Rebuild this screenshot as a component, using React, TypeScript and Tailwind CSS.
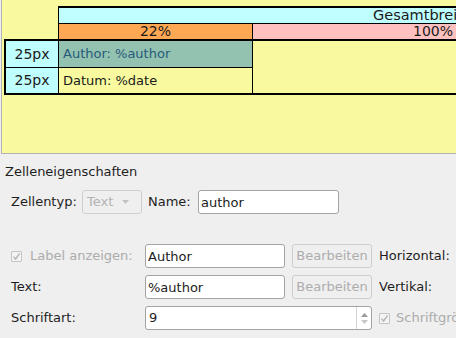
import React from "react";

const FONT = { fontFamily: '"DejaVu Sans", Verdana, sans-serif' };

function CheckBox() {
  return (
    <div className="shrink-0 w-[11px] h-[11px] border border-[#c4c4c4] bg-[#f4f4f4] rounded-[1px] flex items-center justify-center">
      <svg width="9" height="9" viewBox="0 0 9 9">
        <path d="M1.5 4.6 L3.6 7 L7.6 1.4" fill="none" stroke="#b4b4b4" strokeWidth="1.4" />
      </svg>
    </div>
  );
}

function TextInput({ value, width }: { value: string; width: string }) {
  return (
    <div className={`${width} shrink-0 h-[24px] bg-white border border-[#a3a3a3] rounded-[3px] flex items-center pl-[2px] text-[#1c1c1c] leading-none`}>
      {value}
    </div>
  );
}

function EditButton() {
  return (
    <div className="shrink-0 ml-[7px] w-[80px] h-[24px] border border-[#cdcdcd] rounded-[3px] bg-[#efefef] flex items-center justify-center text-[#adadad]">
      Bearbeiten
    </div>
  );
}

export default function App() {
  return (
    <div className="w-[456px] h-[338px] overflow-hidden bg-[#efefef] pl-px text-[13px]" style={FONT}>
      {/* layout preview */}
      <div className="h-[154px] bg-[#f9fa9f] border-l border-b border-[#b3b3b3] overflow-hidden pt-[6px] text-[14px] text-[#1a1a1a]">
        <div className="ml-[56px] w-[420px] border-t-2 border-l border-black">
          <div className="h-[16px] bg-[#c0ffff] border-b border-black flex items-center leading-[15px] whitespace-nowrap pl-[314px] text-[14.5px]">
            Gesamtbreite
          </div>
          <div className="flex h-[15px] leading-[15px]">
            <div className="shrink-0 w-[194px] bg-[#ffa854] border-r border-black text-center">22%</div>
            <div className="flex-1 bg-[#ffc0c0] text-right pr-[25px]">100%</div>
          </div>
        </div>
        <div className="ml-[2px] w-[460px] border-y-2 border-l-2 border-black flex">
          <div className="shrink-0 w-[53px] border-r border-black bg-[#c0ffff]">
            <div className="h-[27px] border-b border-black flex items-center justify-center">25px</div>
            <div className="h-[25px] flex items-center justify-center">25px</div>
          </div>
          <div className="shrink-0 w-[194px] border-r border-black text-[13px]">
            <div className="h-[27px] border-b border-black bg-[#93c2b0] flex items-center pl-[4px] text-[#285a7b]">
              Author: %author
            </div>
            <div className="h-[25px] flex items-center pl-[4px]">Datum: %date</div>
          </div>
        </div>
      </div>

      {/* properties panel */}
      <div className="text-[#1e1e1e] whitespace-nowrap">
        <div className="mt-[10px] pl-[4px] leading-[15px]">Zelleneigenschaften</div>

        <div className="mt-[11px] pl-[10px] flex items-center h-[24px]">
          <div className="shrink-0 w-[71px]">Zellentyp:</div>
          <div className="shrink-0 w-[60px] h-[24px] border border-[#cfcfcf] rounded-[3px] flex items-center pl-[4px] text-[#b3b3b3]">
            <span>Text</span>
            <svg className="ml-[9px]" width="7" height="4" viewBox="0 0 7 4">
              <path d="M0 0 H7 L3.5 4 Z" fill="#c2c2c2" />
            </svg>
          </div>
          <div className="shrink-0 ml-[6px] w-[50px]">Name:</div>
          <TextInput value="author" width="w-[141px]" />
        </div>

        <div className="mt-[30px] pl-[10px] flex items-center h-[24px]">
          <div className="shrink-0 w-[134px] flex items-center">
            <CheckBox />
            <span className="ml-[8px] text-[#acacac]">Label anzeigen:</span>
          </div>
          <TextInput value="Author" width="w-[140px]" />
          <EditButton />
          <div className="shrink-0 ml-[7px]">Horizontal:</div>
        </div>

        <div className="mt-[7px] pl-[10px] flex items-center h-[24px]">
          <div className="shrink-0 w-[134px]">Text:</div>
          <TextInput value="%author" width="w-[140px]" />
          <EditButton />
          <div className="shrink-0 ml-[7px]">Vertikal:</div>
        </div>

        <div className="mt-[7px] pl-[10px] flex items-center h-[24px]">
          <div className="shrink-0 w-[134px]">Schriftart:</div>
          <div className="shrink-0 w-[227px] h-[24px] bg-white border border-[#a3a3a3] rounded-[3px] flex items-center">
            <span className="flex-1 pl-[3px]">9</span>
            <div className="w-[15px] h-full border-l border-[#d4d4d4] flex flex-col items-center justify-center gap-[3px]">
              <svg width="7" height="4" viewBox="0 0 7 4">
                <path d="M0 4 H7 L3.5 0 Z" fill="#9a9a9a" />
              </svg>
              <svg width="7" height="4" viewBox="0 0 7 4">
                <path d="M0 0 H7 L3.5 4 Z" fill="#c6c6c6" />
              </svg>
            </div>
          </div>
          <div className="shrink-0 ml-[7px] flex items-center">
            <CheckBox />
            <span className="ml-[6px] text-[#acacac]">Schriftgröße</span>
          </div>
        </div>
      </div>
    </div>
  );
}
